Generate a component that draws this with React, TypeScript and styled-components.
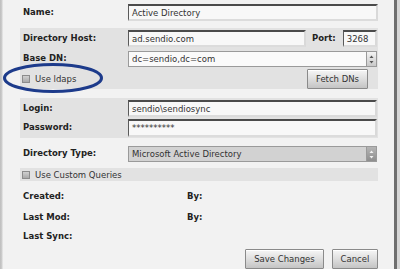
import React from "react";
import styled, { createGlobalStyle } from "styled-components";

const Global = createGlobalStyle`
  html, body { margin: 0; padding: 0; background: #f2f2f2; }
  body { font-family: "DejaVu Sans", Verdana, sans-serif; font-size: 8.5px; color: #222; }
  * { box-sizing: border-box; }
`;

const Frame = styled.div`
  position: relative;
  width: 400px;
  height: 269px;
  overflow: hidden;
  display: flex;
  background: linear-gradient(to right, #bdbdbd 0, #cfcfcf 2px, #f2f2f2 3px, #f2f2f2 100%);
`;

const Panel = styled.div`
  width: 358px;
  margin-left: 20px;
  padding-top: 4px;
  display: flex;
  flex-direction: column;
`;

const RightRail = styled.div`
  margin-left: auto;
  width: 6px;
  border-left: 3px solid #6f6f6f;
  background: #d6d6d6;
`;

const Section = styled.div<{ $mt: number; $pt?: number; $pb?: number }>`
  margin-top: ${(p) => p.$mt}px;
  padding: ${(p) => p.$pt ?? 0}px 0 ${(p) => p.$pb ?? 0}px 0;
  background: #e2e2e2;
  display: flex;
  flex-direction: column;
  gap: ${(p) => p.$pt ?? 0}px;
`;

const Row = styled.div<{ $h: number; $mt?: number }>`
  display: grid;
  grid-template-columns: 105px 1fr;
  align-items: center;
  height: ${(p) => p.$h}px;
  margin-top: ${(p) => p.$mt ?? 0}px;
  padding-left: 3px;
`;

const Label = styled.span`
  font-weight: bold;
  font-size: 8.5px;
  color: #222;
  white-space: nowrap;
  margin-top: -2px;
`;

const Field = styled.div<{ $w?: number; $h: number }>`
  width: ${(p) => (p.$w ? `${p.$w}px` : "100%")};
  height: ${(p) => p.$h}px;
  background: #f8f8f8;
  border-top: 2px solid #4b4b4b;
  border-left: 1px solid #5a5a5a;
  border-right: 2px solid #d9d9d9;
  border-bottom: 2px solid #dcdcdc;
  padding: 0 3px;
  display: flex;
  align-items: center;
  color: #333;
  font-size: 8.5px;
  white-space: nowrap;
  overflow: hidden;
`;

const HostLine = styled.div`
  display: flex;
  align-items: center;
`;

const PortLabel = styled(Label)`
  margin-left: 6px;
  margin-right: 7px;
`;

const Select = styled.div<{ $filled?: boolean; $h: number }>`
  width: 249px;
  height: ${(p) => p.$h}px;
  display: flex;
  align-items: stretch;
  border: 1px solid #9a9a9a;
  background: ${(p) => (p.$filled ? "#d2d2d2" : "#fafafa")};
  color: #333;
  font-size: 8.5px;
`;

const SelectText = styled.span`
  flex: 1;
  display: flex;
  align-items: center;
  padding-left: 3px;
  white-space: nowrap;
`;

const Spinner = styled.span<{ $dark?: boolean }>`
  width: 10px;
  display: flex;
  align-items: center;
  justify-content: center;
  border-left: 1px solid #9a9a9a;
  background: ${(p) =>
    p.$dark
      ? "linear-gradient(#b5b5b5, #8e8e8e)"
      : "linear-gradient(#f4f4f4, #c9c9c9)"};
`;

const CheckRow = styled.div<{ $h: number; $mt?: number; $gray?: boolean }>`
  display: flex;
  align-items: center;
  height: ${(p) => p.$h}px;
  margin-top: ${(p) => p.$mt ?? 0}px;
  padding: 0 10px 0 2px;
  background: ${(p) => (p.$gray ? "#e2e2e2" : "transparent")};
`;

const Box = styled.span`
  width: 8px;
  height: 8px;
  border: 1px solid #8c8c8c;
  background: linear-gradient(#d0d0d0, #a9a9a9);
  margin-right: 5px;
`;

const CheckText = styled.span`
  color: #333;
  font-size: 8.5px;
  white-space: nowrap;
`;

const Button = styled.button<{ $w: number }>`
  width: ${(p) => p.$w}px;
  height: 20px;
  padding: 0;
  font-family: "DejaVu Sans", Verdana, sans-serif;
  font-size: 8.5px;
  color: #333;
  border: 1px solid #8a8a8a;
  border-radius: 1px;
  background: linear-gradient(#f6f6f6 0%, #dedede 50%, #c4c4c4 100%);
  box-shadow: inset 0 1px 0 #ffffff;
`;

const FetchButton = styled(Button)`
  margin-left: auto;
`;

const MetaRow = styled.div<{ $mt: number }>`
  display: grid;
  grid-template-columns: 164px 1fr;
  height: 14px;
  align-items: center;
  margin-top: ${(p) => p.$mt}px;
  padding-left: 3px;
`;

const Actions = styled.div`
  display: flex;
  justify-content: flex-end;
  gap: 8px;
  margin-top: 6px;
`;

const Annotation = styled.svg`
  position: absolute;
  left: 0;
  top: 60px;
  pointer-events: none;
`;

const Arrows: React.FC<{ color: string }> = ({ color }) => (
  <svg width="5" height="9" viewBox="0 0 5 9">
    <path d="M2.5 0.5 L4.5 3 L0.5 3 Z" fill={color} />
    <path d="M2.5 8.5 L4.5 6 L0.5 6 Z" fill={color} />
  </svg>
);

export default function App() {
  return (
    <>
      <Global />
      <Frame>
        <Panel>
          <Row $h={17}>
            <Label>Name:</Label>
            <Field $w={250} $h={17}>Active Directory</Field>
          </Row>

          <Section $mt={7} $pt={2} $pb={1}>
            <Row $h={17}>
              <Label>Directory Host:</Label>
              <HostLine>
                <Field $w={178} $h={17}>ad.sendio.com</Field>
                <PortLabel>Port:</PortLabel>
                <Field $w={34} $h={17}>3268</Field>
              </HostLine>
            </Row>
            <Row $h={16} $mt={2}>
              <Label>Base DN:</Label>
              <Select $h={16}>
                <SelectText>dc=sendio,dc=com</SelectText>
                <Spinner>
                  <Arrows color="#555" />
                </Spinner>
              </Select>
            </Row>
            <CheckRow $h={19} $mt={0}>
              <Box />
              <CheckText>Use ldaps</CheckText>
              <FetchButton $w={61}>Fetch DNs</FetchButton>
            </CheckRow>
          </Section>

          <Section $mt={9} $pt={2} $pb={1}>
            <Row $h={17}>
              <Label>Login:</Label>
              <Field $w={249} $h={17}>sendio\sendiosync</Field>
            </Row>
            <Row $h={18}>
              <Label>Password:</Label>
              <Field $w={249} $h={18}>**********</Field>
            </Row>
          </Section>

          <Row $h={16} $mt={8}>
            <Label>Directory Type:</Label>
            <Select $filled $h={16}>
              <SelectText>Microsoft Active Directory</SelectText>
              <Spinner $dark>
                <Arrows color="#f2f2f2" />
              </Spinner>
            </Select>
          </Row>

          <CheckRow $h={14} $mt={6} $gray>
            <Box />
            <CheckText>Use Custom Queries</CheckText>
          </CheckRow>

          <MetaRow $mt={9}>
            <Label>Created:</Label>
            <Label>By:</Label>
          </MetaRow>
          <MetaRow $mt={8}>
            <Label>Last Mod:</Label>
            <Label>By:</Label>
          </MetaRow>
          <MetaRow $mt={6}>
            <Label>Last Sync:</Label>
          </MetaRow>

          <Actions>
            <Button $w={79}>Save Changes</Button>
            <Button $w={46}>Cancel</Button>
          </Actions>
        </Panel>
        <RightRail />
        <Annotation width="110" height="40" viewBox="0 0 110 40">
          <ellipse cx="53" cy="18" rx="48.5" ry="13.5" fill="none" stroke="#1d3b8b" strokeWidth="3" />
        </Annotation>
      </Frame>
    </>
  );
}
